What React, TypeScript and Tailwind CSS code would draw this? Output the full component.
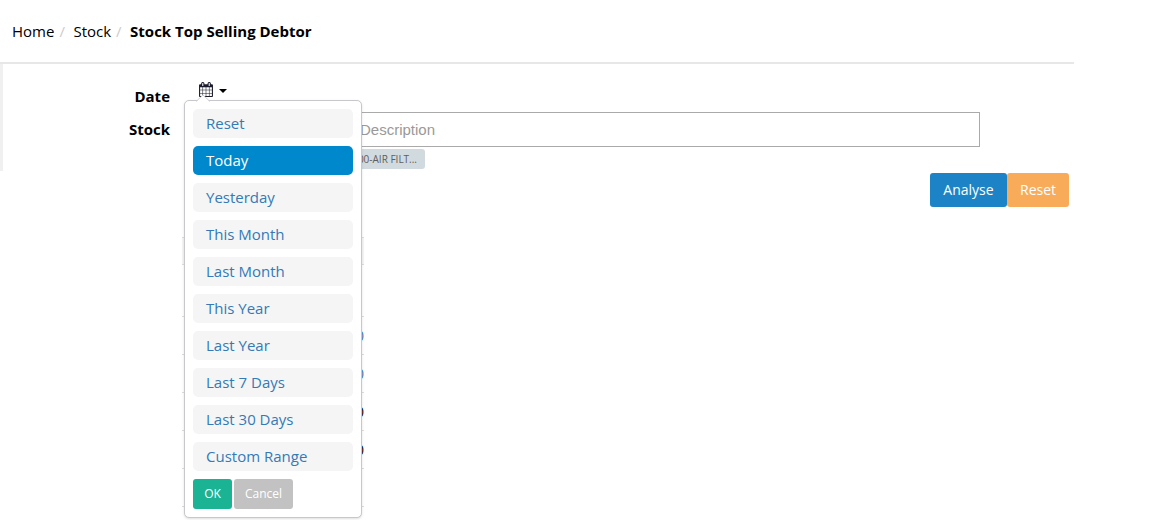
import React from "react";

const ranges = [
  "Reset",
  "Today",
  "Yesterday",
  "This Month",
  "Last Month",
  "This Year",
  "Last Year",
  "Last 7 Days",
  "Last 30 Days",
  "Custom Range",
];

function CalendarIcon() {
  return (
    <svg viewBox="0 0 1664 1792" className="h-[15px] w-[14px]" fill="#1a1c2c" fillRule="evenodd" aria-hidden="true">
      <path d="M128 1664h288v-288h-288zM480 1664h320v-288h-320zM128 1312h288v-320h-288zM480 1312h320v-320h-320zM128 928h288v-288h-288zM864 1664h320v-288h-320zM480 928h320v-288h-320zM1248 1664h288v-288h-288zM864 1312h320v-320h-320zM512 448v-288q0-13-9.500-22.500t-22.500-9.500h-64q-13 0-22.500 9.500t-9.500 22.500v288q0 13 9.500 22.500t22.500 9.500h64q13 0 22.500-9.500t9.500-22.500zM1248 1312h288v-320h-288zM864 928h320v-288h-320zM1248 928h288v-288h-288zM1280 448v-288q0-13-9.500-22.500t-22.500-9.500h-64q-13 0-22.500 9.500t-9.500 22.500v288q0 13 9.500 22.500t22.500 9.500h64q13 0 22.500-9.500t9.500-22.500zM1664 384v1280q0 52-38 90t-90 38h-1408q-52 0-90-38t-38-90v-1280q0-52 38-90t90-38h128v-96q0-66 47-113t113-47h64q66 0 113 47t47 113v96h384v-96q0-66 47-113t113-47h64q66 0 113 47t47 113v96h128q52 0 90 38t38 90z" />
    </svg>
  );
}

function DateMenu() {
  return (
    <div className="absolute top-full left-0 z-10 w-[178px] rounded-[5px] border border-[#c8c8cc] bg-white p-2 shadow-sm">
      <svg viewBox="0 0 14 7" className="absolute -top-[6px] left-[11px] h-[7px] w-[14px]" aria-hidden="true">
        <path d="M0 7L7 0L14 7Z" fill="#fff" />
        <path d="M0 6.500L7 0L14 6.500" fill="none" stroke="#d0d0d4" />
      </svg>
      <ul className="flex flex-col gap-2">
        {ranges.map((range) => (
          <li key={range}>
            <button
              type="button"
              className={
                range === "Today"
                  ? "block h-[29px] w-full rounded-[5px] bg-[#0088cc] px-[13px] text-left text-[15px] text-white"
                  : "block h-[29px] w-full rounded-[5px] bg-[#f5f5f5] px-[13px] text-left text-[15px] text-[#337ab7]"
              }
            >
              {range}
            </button>
          </li>
        ))}
      </ul>
      <div className="mt-2 flex gap-0.5">
        <button type="button" className="h-[30px] w-[39px] rounded-[3px] bg-[#1ab394] text-xs text-white">
          OK
        </button>
        <button type="button" className="h-[30px] w-[59px] rounded-[3px] bg-[#c2c2c2] text-xs text-white">
          Cancel
        </button>
      </div>
    </div>
  );
}

const rows = [
  { height: "h-[52px]", value: "", color: "" },
  { height: "h-[38px]", value: "0", color: "text-[#337ab7]" },
  { height: "h-[38px]", value: "0", color: "text-[#337ab7]" },
  { height: "h-[38px]", value: "0", color: "text-black" },
  { height: "h-[38px]", value: "0", color: "text-black" },
  { height: "h-[38px]", value: "", color: "" },
];

export default function App() {
  return (
    <div className="h-screen overflow-hidden bg-white font-['Open_Sans',sans-serif] text-[15px] text-black">
      <div className="mr-[92px]">
        <nav className="flex h-16 items-center border-b-2 border-[#e7e7e7] pl-3" aria-label="Breadcrumb">
          <a href="#home">Home</a>
          <span className="w-[19px] pl-[5px] text-[#ccc]">/</span>
          <a href="#stock">Stock</a>
          <span className="w-[19px] pl-[5px] text-[#ccc]">/</span>
          <strong className="font-bold">Stock Top Selling Debtor</strong>
        </nav>

        <form>
          <div className="flex h-[107px] flex-col border-l-[3px] border-[#f0f0f0] pr-[94px]">
            <div className="flex h-12 items-start">
              <label htmlFor="range" className="w-[167px] pt-[22px] text-right leading-5 font-bold">
                Date
              </label>
              <div className="relative ml-[14px] h-9">
                <button id="range" type="button" aria-expanded="true" className="flex h-9 items-end gap-1.5 pb-[3px] pl-[15px]">
                  <CalendarIcon />
                  <svg viewBox="0 0 8 4" className="mb-1 h-1 w-2" aria-hidden="true">
                    <path d="M0 0H8L4 4Z" fill="#000" />
                  </svg>
                </button>
                <DateMenu />
              </div>
            </div>
            <div className="flex items-start">
              <label htmlFor="description" className="w-[167px] pt-[7px] text-right leading-5 font-bold">
                Stock
              </label>
              <div className="ml-[15px] flex-1">
                <div className="flex">
                  <input
                    aria-label="Stock code"
                    className="h-[35px] w-[162px] border border-r-0 border-[#aaa] px-3"
                  />
                  <input
                    id="description"
                    placeholder="Description"
                    className="h-[35px] min-w-0 flex-1 border border-[#aaa] px-3 font-['Liberation_Sans',sans-serif] placeholder:text-[#999]"
                  />
                </div>
                <div className="mt-0.5 flex h-5 w-60 items-center justify-end rounded-[3px] bg-[#d1dade] px-2 text-[10px] font-medium text-[#5e5e5e]">
                  00-AIR FILT...
                </div>
              </div>
            </div>
          </div>
          <div className="flex justify-end pt-0.5 pr-[5px]">
            <button type="submit" className="h-[34px] w-[77px] rounded-[3px] bg-[#1c84c6] text-sm text-white">
              Analyse
            </button>
            <button type="reset" className="h-[34px] w-[62px] rounded-[3px] bg-[#f8ac59] text-sm text-white">
              Reset
            </button>
          </div>
        </form>

        <table className="mt-[30px] ml-[182px] w-[182px] border-collapse">
          <thead>
            <tr className="h-[27px] border-y border-[#ddd] bg-[#f5f5f6]">
              <th aria-label="Total" />
            </tr>
          </thead>
          <tbody>
            {rows.map((row, i) => (
              <tr key={i} className={`${row.height} border-b border-[#ddd]`}>
                <td className={`p-0 text-right text-sm ${row.color}`}>{row.value}</td>
              </tr>
            ))}
          </tbody>
        </table>
      </div>
    </div>
  );
}
